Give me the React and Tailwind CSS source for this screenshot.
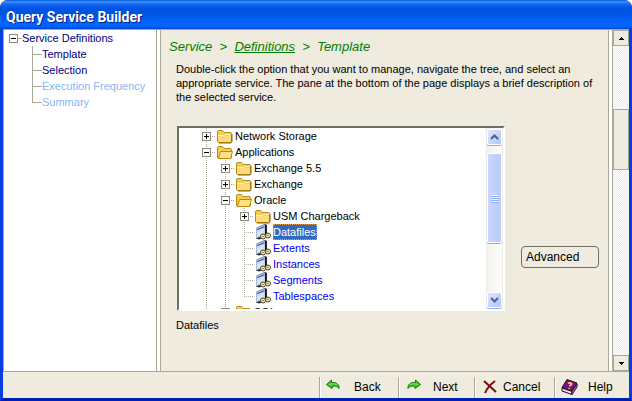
import React from "react";

const LINE = "#aca899";

function Guide({ kind }) {
  const box = kind === "plus" || kind === "minus";
  const dots = { stroke: LINE, strokeWidth: 1, strokeDasharray: "1 1" };
  const svg = (
    <svg width="19" height="16" viewBox="0 0 19 16" shapeRendering="crispEdges" className="block">
      {kind !== "empty" && <path d={kind === "end" ? "M9.5 0V9" : "M9.5 0V16"} fill="none" {...dots} />}
      {kind !== "line" && <path d="M9 8.5H19" fill="none" {...dots} />}
      {box && <rect x="5.5" y="4.5" width="8" height="8" fill="#fff" stroke="#8c8a7c" />}
      {box && <path d="M7 8.5H12" stroke="#000" />}
      {kind === "plus" && <path d="M9.5 6V11" stroke="#000" />}
    </svg>
  );
  if (box) {
    return (
      <button type="button" aria-label={kind === "plus" ? "Expand" : "Collapse"} className="h-4 w-[19px] shrink-0">
        {svg}
      </button>
    );
  }
  return <span className="h-4 w-[19px] shrink-0">{svg}</span>;
}

function Folder({ open }) {
  return (
    <svg width="16" height="16" viewBox="0 0 16 16" className="block shrink-0">
      <path d="M.5 4Q.5 2.5 2 2.5H5.5L7 4.5H13Q14.5 4.5 14.5 6V13Q14.5 14.5 13 14.5H2Q.5 14.5 .5 13Z" fill="#f4cc58" stroke="#bc8c10" />
      {open ? (
        <path d="M3.5 7.5H15.5L13.5 14.5H1.5Z" fill="#ffe288" stroke="#bc8c10" strokeLinejoin="round" />
      ) : (
        <>
          <path d="M1 8H14V14H1Z" fill="#fcdc78" />
          <path d="M1 7.5H7.5L9 6.5H14" fill="none" stroke="#fff4c0" />
          <path d="M15 6V13.5Q15 14.5 14 15H2" fill="none" stroke="#8c6408" />
        </>
      )}
    </svg>
  );
}

function ServiceIcon() {
  return (
    <svg width="16" height="16" viewBox="0 0 16 16" className="block shrink-0">
      <path d="M1 4L10 0L12 1V12L4 15.5L1 14.5Z" fill="#1c2028" />
      <path d="M1 4L10 .5V11.5L1 14.5Z" fill="#a8b8d0" />
      <path d="M2 5L9.5 2V10.5L2 13Z" fill="#d4e2f2" />
      <path d="M2 5L9.5 2V3.5L2 6.5Z" fill="#4470cc" />
      <circle cx="8" cy="12.5" r="2.5" fill="#f0e6a8" stroke="#4c4424" />
      <circle cx="13" cy="11.5" r="2.5" fill="#f0e6a8" stroke="#4c4424" />
      <rect x="7.5" y="12" width="1" height="1" fill="#332e18" />
      <rect x="12.5" y="11" width="1" height="1" fill="#332e18" />
    </svg>
  );
}

const nodes = [
  { guides: ["plus"], label: "Network Storage", icon: "folder" },
  { guides: ["minus"], label: "Applications", icon: "open" },
  { guides: ["line", "plus"], label: "Exchange 5.5", icon: "folder" },
  { guides: ["line", "plus"], label: "Exchange", icon: "folder" },
  { guides: ["line", "minus"], label: "Oracle", icon: "open" },
  { guides: ["line", "line", "plus"], label: "USM Chargeback", icon: "folder" },
  { guides: ["line", "line", "tee"], label: "Datafiles", selected: true },
  { guides: ["line", "line", "tee"], label: "Extents" },
  { guides: ["line", "line", "tee"], label: "Instances" },
  { guides: ["line", "line", "tee"], label: "Segments" },
  { guides: ["line", "line", "end"], label: "Tablespaces" },
  { guides: ["line", "plus"], label: "SQL", icon: "folder" },
];

function TreeNode({ node }) {
  const tone = node.selected
    ? "bg-[#316ac5] text-white outline-1 -outline-offset-1 outline-dotted outline-[#e0a050]"
    : node.icon
      ? "text-black"
      : "text-[#0000ee]";
  return (
    <li role="treeitem" aria-selected={!!node.selected} className="flex h-4 items-center">
      {node.guides.map((kind, i) => (
        <Guide key={i} kind={kind} />
      ))}
      <span className="ml-px mr-0.5">{node.icon ? <Folder open={node.icon === "open"} /> : <ServiceIcon />}</span>
      <span className={`pr-px leading-4 whitespace-nowrap ${tone}`}>{node.label}</span>
    </li>
  );
}

function BlueArrow({ down }) {
  return (
    <button
      type="button"
      aria-label={down ? "Scroll down" : "Scroll up"}
      className="flex h-4 w-full shrink-0 items-center justify-center rounded-xs border border-white bg-linear-to-br from-[#dce6ff] to-[#b0c6f8] shadow-[0_1px_0_#8faee4]"
    >
      <svg width="9" height="6" viewBox="0 0 9 6">
        <path d={down ? "M1 1L4.5 4.5L8 1" : "M1 5L4.5 1.5L8 5"} fill="none" stroke="#4d6185" strokeWidth="2" />
      </svg>
    </button>
  );
}

function ServiceTree() {
  return (
    <div className="flex h-[185px] w-[328px] border-2 border-t-[#716f64] border-l-[#716f64] border-r-white border-b-white bg-white">
      <ul role="tree" aria-label="Services" className="min-w-0 flex-1 overflow-hidden pl-[18px]">
        {nodes.map((node) => (
          <TreeNode key={node.label} node={node} />
        ))}
      </ul>
      <div className="flex w-[17px] flex-col border-x border-[#eeede5] bg-linear-to-r from-[#f3f1ec] to-[#fefefb] py-px">
        <BlueArrow />
        <div className="flex min-h-0 flex-1 flex-col pt-2">
          <div className="flex h-[90px] flex-col items-center justify-center gap-px rounded-xs border border-white bg-linear-to-r from-[#c9d7ff] to-[#b9cbfb] shadow-[0_1px_0_#8faee4]">
            {[0, 1, 2, 3].map((n) => (
              <span key={n} className="h-px w-[7px] bg-[#eef4fe] shadow-[0_1px_0_#8cb0f8]" />
            ))}
          </div>
        </div>
        <BlueArrow down />
      </div>
    </div>
  );
}

function PlainArrow({ down }) {
  return (
    <button
      type="button"
      aria-label={down ? "Scroll page down" : "Scroll page up"}
      className="flex h-4 shrink-0 items-center justify-center border border-[#aca899] bg-[#efebde]"
    >
      <svg width="5" height="3" viewBox="0 0 5 3" shapeRendering="crispEdges">
        <path d={down ? "M0 0H5V1H4V2H3V3H2V2H1V1H0Z" : "M2 0H3V1H4V2H5V3H0V2H1V1H2Z"} />
      </svg>
    </button>
  );
}

function PageScrollbar() {
  return (
    <div className="flex w-4 shrink-0 flex-col bg-[repeating-conic-gradient(#ffffff_0_25%,#efebde_0_50%)] bg-[length:2px_2px]">
      <PlainArrow />
      <div className="min-h-0 flex-1 pt-[63px]">
        <div className="h-[61px] border border-[#aca899] bg-[#efebde]" />
      </div>
      <PlainArrow down />
    </div>
  );
}

function Divider() {
  return <div className="w-[5px] shrink-0 border-x border-[#aca899] bg-white" />;
}

const steps = [
  { label: "Template", enabled: true },
  { label: "Selection", enabled: true },
  { label: "Execution Frequency", enabled: false },
  { label: "Summary", enabled: false },
];

function StepsNav() {
  return (
    <nav aria-label="Steps" className="w-[153px] shrink-0 border-l border-[#aca899] bg-white">
      <div className="flex h-4 items-center pl-[5px] text-[#000080]">
        <button type="button" aria-label="Collapse" className="flex h-[9px] w-[9px] items-center justify-center border border-[#8c8a7c]">
          <span className="h-px w-[5px] bg-black" />
        </button>
        <span className="h-px w-1 bg-[#aca899]" />
        <a href="#definitions" className="whitespace-nowrap">Service Definitions</a>
      </div>
      <ul>
        {steps.map((s, i) => (
          <li key={s.label} className="flex h-4 pl-7">
            <svg width="10" height="16" viewBox="0 0 10 16" shapeRendering="crispEdges" className="shrink-0">
              <path d={i === steps.length - 1 ? "M.5 0V8.5H10" : "M.5 0V16M0 8.5H10"} fill="none" stroke={LINE} />
            </svg>
            <a
              href={`#step-${i + 1}`}
              aria-disabled={!s.enabled}
              className={`leading-4 whitespace-nowrap ${s.enabled ? "text-[#000080]" : "text-[#8ab4f8]"}`}
            >
              {s.label}
            </a>
          </li>
        ))}
      </ul>
    </nav>
  );
}

function Arrow({ flip }) {
  return (
    <svg width="14" height="12" viewBox="0 0 14 12" className={`mb-1 ${flip ? "-scale-x-100" : ""}`}>
      <path d="M5.5 1L.5 5.5L6 9.5L6.5 7.5C9 6.5 11 7 13 9.5C13.5 5.5 10.5 3 5.5 3.5Z" fill="#34c820" stroke="#1c7414" strokeLinejoin="round" />
      <path d="M3 5.5C6 4.5 9 4.5 11 6" fill="none" stroke="#7cf05c" />
    </svg>
  );
}

function CancelIcon() {
  return (
    <svg width="14" height="14" viewBox="0 0 14 14">
      <path d="M1 1L13 12M12 1C8 4 4 8 2 13" fill="none" stroke="#7c0c0c" strokeWidth="2" />
    </svg>
  );
}

function HelpIcon() {
  return (
    <svg width="17" height="16" viewBox="0 0 17 16">
      <path d="M6 .5L16 4L11 12L1 8.5Z" fill="#7e1088" stroke="#2c0430" />
      <path d="M1 9L11 12.5V15.5L1 12Z" fill="#e8e4e8" stroke="#2c0430" />
      <path d="M11 12.5L16 5V8L11 15.5Z" fill="#a0a0a8" stroke="#2c0430" />
      <path d="M7 4.5Q9 3 10.5 4.5Q11 6 9 6.5L8.5 7.5M8 9V10" fill="none" stroke="#ffee20" strokeWidth="1.5" />
    </svg>
  );
}

function FooterButton({ icon, label, className }) {
  return (
    <button type="button" className={`flex h-[21px] items-center border-l border-[#aca899] text-[12px] shadow-[inset_1px_0_0_#fff] ${className}`}>
      {icon}
      {label}
    </button>
  );
}

export default function App() {
  return (
    <div className="bg-[#fff8e0]">
      <div className="flex h-screen flex-col overflow-hidden rounded-t-lg bg-[#0831d9] font-['Liberation_Sans',Arial,sans-serif] text-[11px] text-black">
        <header className="flex h-[29px] shrink-0 items-center bg-[linear-gradient(180deg,#0054d8_0%,#3c90ff_6%,#1468f0_14%,#0053e1_28%,#0055e5_50%,#0164fc_76%,#0066ff_90%,#0043cf_100%)] px-1.5 pt-1">
          <h1 className="font-[Roboto,sans-serif] text-[14px] leading-4 font-bold text-white [text-shadow:1px_1px_0_#0a1883]">
            Query Service Builder
          </h1>
        </header>
        <div className="flex min-h-0 flex-1 flex-col border-x-3 border-b-3 border-[#0a3de0] border-b-[#0020b4] bg-[#efebde]">
          <div className="flex min-h-0 flex-1 border-y border-[#aca899]">
            <StepsNav />
            <Divider />
            <main className="min-w-0 flex-1 overflow-hidden pt-2">
              <p className="pl-2 text-[13px] leading-[18px] whitespace-pre text-[#008000] italic">
                <span>Service  &gt;  </span>
                <a href="#definitions" className="underline">Definitions</a>
                <span>  &gt;  Template</span>
              </p>
              <p className="mt-[6px] pr-3 pl-[15px] text-[11px] leading-[14px]">
                Double-click the option that you want to manage, navigate the tree, and select an appropriate service. The
                pane at the bottom of the page displays a brief description of the selected service.
              </p>
              <div className="mt-[22px] flex items-end justify-between pr-[9px] pl-4">
                <ServiceTree />
                <button type="button" className="mb-[43px] h-[22px] w-[78px] rounded-sm border border-[#716f64] px-1 text-left text-[12px]">
                  Advanced
                </button>
              </div>
              <p className="mt-[7px] pl-[15px] leading-[14px]">Datafiles</p>
            </main>
            <Divider />
            <PageScrollbar />
          </div>
          <footer className="flex h-[26px] shrink-0 items-center justify-end pt-1">
            <FooterButton icon={<Arrow />} label="Back" className="w-[79px] gap-[14px] pl-[6px]" />
            <FooterButton icon={<Arrow flip />} label="Next" className="w-[76px] gap-3 pl-2" />
            <FooterButton icon={<CancelIcon />} label="Cancel" className="w-20 gap-[6px] pl-2" />
            <FooterButton icon={<HelpIcon />} label="Help" className="w-[75px] gap-[10px] pl-[6px]" />
          </footer>
        </div>
      </div>
    </div>
  );
}
